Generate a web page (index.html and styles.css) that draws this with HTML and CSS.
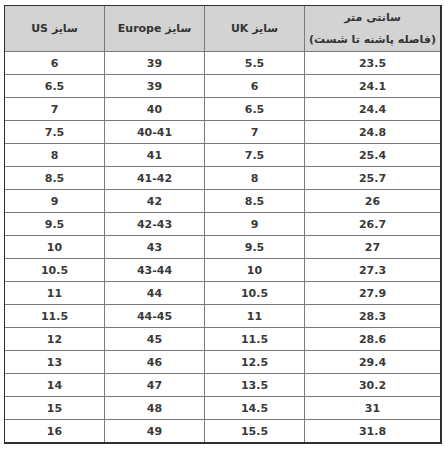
FILE: index.html
```html
<!DOCTYPE html>
<html lang="fa">
<head>
<meta charset="utf-8">
<link rel="stylesheet" href="styles.css">
</head>
<body>
<div class="wrap">
  <div class="grid">
    <div class="cell head"><span>سانتی متر<br>(فاصله پاشنه تا شست)</span></div>
    <div class="cell head">سایز UK</div>
    <div class="cell head">سایز Europe</div>
    <div class="cell head last">سایز US</div>

    <div class="cell">23.5</div><div class="cell">5.5</div><div class="cell">39</div><div class="cell last">6</div>
    <div class="cell">24.1</div><div class="cell">6</div><div class="cell">39</div><div class="cell last">6.5</div>
    <div class="cell">24.4</div><div class="cell">6.5</div><div class="cell">40</div><div class="cell last">7</div>
    <div class="cell">24.8</div><div class="cell">7</div><div class="cell">40-41</div><div class="cell last">7.5</div>
    <div class="cell">25.4</div><div class="cell">7.5</div><div class="cell">41</div><div class="cell last">8</div>
    <div class="cell">25.7</div><div class="cell">8</div><div class="cell">41-42</div><div class="cell last">8.5</div>
    <div class="cell">26</div><div class="cell">8.5</div><div class="cell">42</div><div class="cell last">9</div>
    <div class="cell">26.7</div><div class="cell">9</div><div class="cell">42-43</div><div class="cell last">9.5</div>
    <div class="cell">27</div><div class="cell">9.5</div><div class="cell">43</div><div class="cell last">10</div>
    <div class="cell">27.3</div><div class="cell">10</div><div class="cell">43-44</div><div class="cell last">10.5</div>
    <div class="cell">27.9</div><div class="cell">10.5</div><div class="cell">44</div><div class="cell last">11</div>
    <div class="cell">28.3</div><div class="cell">11</div><div class="cell">44-45</div><div class="cell last">11.5</div>
    <div class="cell">28.6</div><div class="cell">11.5</div><div class="cell">45</div><div class="cell last">12</div>
    <div class="cell">29.4</div><div class="cell">12.5</div><div class="cell">46</div><div class="cell last">13</div>
    <div class="cell">30.2</div><div class="cell">13.5</div><div class="cell">47</div><div class="cell last">14</div>
    <div class="cell">31</div><div class="cell">14.5</div><div class="cell">48</div><div class="cell last">15</div>
    <div class="cell bottom">31.8</div><div class="cell bottom">15.5</div><div class="cell bottom">49</div><div class="cell bottom last">16</div>
  </div>
</div>
</body>
</html>
```
FILE: styles.css
```css
html, body {
  margin: 0;
  padding: 0;
  background: #ffffff;
}
body {
  padding: 5px 0 0 4px;
  font-family: "DejaVu Sans", sans-serif;
  font-weight: bold;
  font-size: 11px;
  color: #3a3a3a;
}
.wrap {
  display: inline-block;
  border-style: solid;
  border-color: #2e2e2e;
  border-width: 1px 2px 2px 1px;
}
.grid {
  direction: rtl;
  display: grid;
  grid-template-columns: 136px 100px 100px 99px;
  grid-template-rows: 46px repeat(16, 23px) 22px;
}
.cell {
  box-sizing: border-box;
  display: flex;
  align-items: center;
  justify-content: center;
  text-align: center;
  border-left: 1px solid #7a7a7a;
  border-bottom: 1px solid #7a7a7a;
  direction: rtl;
  unicode-bidi: plaintext;
}
.cell.last {
  border-left: none;
}
.cell.bottom {
  border-bottom: none;
}
.head {
  background: #d3d3d3;
  color: #333333;
  line-height: 22px;
}
```
